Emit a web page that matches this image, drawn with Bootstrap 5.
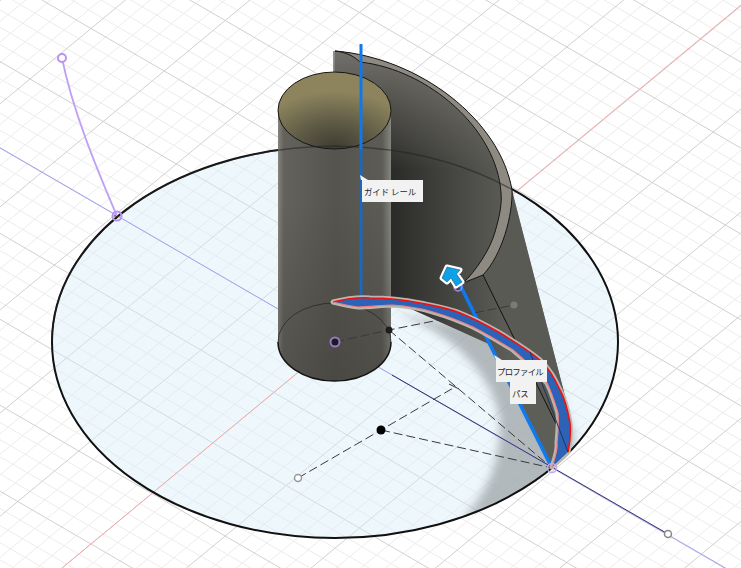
<!DOCTYPE html>
<html lang="en">
<head>
    <meta charset="UTF-8">
    <meta name="viewport" content="width=device-width, initial-scale=1.0">
    <title>Sweep</title>
    <link rel="stylesheet" href="https://cdn.jsdelivr.net/npm/bootstrap@5.3.3/dist/css/bootstrap.min.css">
    <style>
        html, body { margin: 0; background: #fff; overflow: hidden; }
        .cad-view { width: 741px; height: 568px; }
        .tip-label {
            background: #f2f2f2;
            color: #222;
            font: 8.4px/22px "Noto Sans CJK JP", "Liberation Sans", sans-serif;
            height: 22px;
            padding-left: 2px;
        }
        .tip-guide { left: 362px; top: 180px; width: 61px; }
        .tip-profile { left: 496px; top: 360px; width: 51px; letter-spacing: -.7px; padding-left: 1px; }
        .tip-path { left: 510px; top: 382px; width: 26px; }
    </style>
    <script src="https://cdn.jsdelivr.net/npm/bootstrap@5.3.3/dist/js/bootstrap.bundle.min.js"></script>
</head>
<body>
    <div class="cad-view position-relative overflow-hidden">
        <svg class="d-block" width="741" height="568" viewBox="0 0 741 568" xmlns="http://www.w3.org/2000/svg">
            <defs>
                <clipPath id="discClip"><ellipse cx="335" cy="342" rx="283" ry="196"/></clipPath>
                <filter id="soft" x="-20%" y="-20%" width="140%" height="140%"><feGaussianBlur stdDeviation="5"/></filter>
                <linearGradient id="cylFill" gradientUnits="userSpaceOnUse" x1="278" y1="0" x2="391" y2="0">
                    <stop offset="0" stop-color="#85857e"/>
                    <stop offset=".05" stop-color="#63625c"/>
                    <stop offset=".5" stop-color="#55544e"/>
                    <stop offset=".92" stop-color="#5c5b55"/>
                    <stop offset="1" stop-color="#85857f"/>
                </linearGradient>
                <linearGradient id="cylShade" gradientUnits="userSpaceOnUse" x1="0" y1="200" x2="0" y2="381">
                    <stop offset="0" stop-color="#33322e" stop-opacity="0"/>
                    <stop offset="1" stop-color="#33322e" stop-opacity=".35"/>
                </linearGradient>
                <radialGradient id="capFill" cx=".5" cy="1" r=".75">
                    <stop offset="0" stop-color="#3d3b32"/>
                    <stop offset=".45" stop-color="#5d5944"/>
                    <stop offset="1" stop-color="#8d845e"/>
                </radialGradient>
                <linearGradient id="wallFill" gradientUnits="userSpaceOnUse" x1="391" y1="0" x2="510" y2="0">
                    <stop offset="0" stop-color="#2a2a28"/>
                    <stop offset="1" stop-color="#5e5e59"/>
                </linearGradient>
                <linearGradient id="wallTop" gradientUnits="userSpaceOnUse" x1="0" y1="50" x2="0" y2="170">
                    <stop offset="0" stop-color="#8a8880" stop-opacity=".75"/>
                    <stop offset="1" stop-color="#8a8880" stop-opacity="0"/>
                </linearGradient>
            </defs>

            <path id="minorGrid" fill="none" stroke="#ececec" stroke-width="1"/>
            <path id="majorGrid" fill="none" stroke="#d0d0d0" stroke-width="1"/>

            <!-- sketch plane -->
            <ellipse cx="335" cy="342" rx="283" ry="196" fill="#d5ebf7" fill-opacity=".42"/>
            <g clip-path="url(#discClip)">
                <path d="M392,312 C440,325 492,368 500,420 C500,460 490,490 462,520 L560,490 L575,440 L540,340 Z" fill="#a3a9ac" fill-opacity=".8" filter="url(#soft)"/>
            </g>

            <!-- axes -->
            <line x1="62" y1="568" x2="741" y2="5" stroke="#f4aaaa" stroke-width="1"/>
            <line x1="0" y1="148" x2="741" y2="577" stroke="#a3a3f5" stroke-width="1"/>
            <line x1="392" y1="375" x2="668" y2="534" stroke="#34346e" stroke-width="1"/>

            <ellipse cx="335" cy="342" rx="283" ry="196" fill="none" stroke="#111" stroke-width="2"/>

            <!-- swept wall -->
            <path d="M335,51 C420,58 500,120 512,190 L566,400 L570,452 L552,467 L491,345 L391,300 L334,300 Z" fill="url(#wallFill)"/>
            <path d="M335,51 C420,58 500,120 512,190 L391,192 L391,110 L334,110 Z" fill="url(#wallTop)"/>
            <path d="M512,192 L566,400 L570,452 L483,275 Z" fill="#5a5a55"/>
            <path d="M335,51 C420,58 500,120 512,190 C513,215 502,255 483,275 L463,283 C475,272 490,250 495,232 C500,215 502,203 501,193 C497,130 430,70 360,62 C354,56 345,52 335,51 Z" fill="#8e8a82" stroke="#161616" stroke-width="1" stroke-linejoin="round"/>
            <path d="M483,275 L570,452" fill="none" stroke="#111" stroke-width="1"/>
            <path d="M334,51 V74" stroke="#222" stroke-width="1"/>

            <!-- cylinder -->
            <path d="M278,110 H391 V342 A56.500,39 0 0 1 278,342 Z" fill="url(#cylFill)"/>
            <path d="M278,110 H391 V342 A56.500,39 0 0 1 278,342 Z" fill="url(#cylShade)"/>
            <path d="M278,342 A56.500,39 0 0 0 391,342" fill="none" stroke="#111" stroke-width="1.500"/>
            <path d="M278,342 A56.500,39 0 0 1 391,342" fill="none" stroke="#222" stroke-opacity=".7" stroke-width="1"/>
            <ellipse cx="334.500" cy="110.500" rx="56.500" ry="38.500" fill="url(#capFill)" stroke="#161616" stroke-width="1"/>
            <path d="M52,342 A283,196 0 0 1 513,190" fill="none" stroke="#222" stroke-opacity=".55" stroke-width="1.500"/>

            <!-- guide rail and path -->
            <line x1="361" y1="44" x2="361" y2="149" stroke="#1078ea" stroke-width="3"/>
            <line x1="361" y1="149" x2="361" y2="300" stroke="#1d68bd" stroke-width="3"/>
            <line x1="460" y1="285" x2="552" y2="468" stroke="#0f7af0" stroke-width="3.500"/>

            <!-- construction lines -->
            <g fill="none" stroke="#3a3a3a" stroke-width="1" stroke-dasharray="9 4">
                <path d="M335,342 L389,330 L514,305"/>
                <path d="M389,330 L552,468"/>
                <path d="M298,478 L381,430 L455,387"/>
                <path d="M381,430 L552,468"/>
            </g>
            <path d="M449,384 L459,389" stroke="#333" stroke-width="1"/>

            <!-- profile -->
            <path d="M333,302 C345,299 358,297 370,298 C390,298 405,300 420,303 C435,306 448,308 460,313 C475,319 488,326 500,333 C515,342 528,350 540,360 C550,369 555,379 560,390 C566,401 568,412 570,423 C571,434 570,443 568,452 L552,467 C555,458 558,450 557,443 C558,432 559,422 558,413 C555,403 552,393 547,383 C537,372 526,361 513,350 C500,342 487,334 473,327 C460,321 447,316 433,312 C420,308 406,306 393,305 C382,305 370,307 358,307 C349,306 341,304 333,302 Z" fill="#2d63b6" stroke="#bdb6ae" stroke-width="5" stroke-linejoin="round" paint-order="stroke"/>
            <path d="M333,302 C345,299 358,297 370,298 C390,298 405,300 420,303 C435,306 448,308 460,313 C475,319 488,326 500,333 C515,342 528,350 540,360 C550,369 555,379 560,390 C566,401 568,412 570,423 C571,434 570,443 568,452" fill="none" stroke="#f01010" stroke-width="1.600"/>
            <path d="M333,302 C341,304 349,306 358,307 C370,307 382,305 393,305 C406,306 420,308 433,312 C447,316 460,321 473,327 C487,334 500,342 513,350 C526,361 537,372 547,383 C552,393 555,403 558,413 C559,422 558,432 557,443 C558,450 555,458 552,467" fill="none" stroke="#ef7f7f" stroke-width="1.200"/>
            <path d="M530,352 L568,452" fill="none" stroke="#1c3560" stroke-width="1"/>

            <!-- sketch points -->
            <path d="M62,58 C72,108 95,165 117,216" fill="none" stroke="#c0a0f5" stroke-width="1.800"/>
            <circle cx="62" cy="58" r="4" fill="#fff" stroke="#b892ee" stroke-width="2"/>
            <circle cx="117" cy="216" r="4.500" fill="none" stroke="#b892ee" stroke-width="2"/>
            <path d="M114,216 H120" stroke="#333" stroke-width="1" stroke-dasharray="2 1"/>
            <circle cx="335" cy="342" r="4.500" fill="#1c1c20" stroke="#9a78c8" stroke-width="2"/>
            <circle cx="389" cy="330" r="3.500" fill="#1d1d1b"/>
            <circle cx="381" cy="430" r="4.500" fill="#000"/>
            <circle cx="298" cy="478" r="3.500" fill="#fff" stroke="#999" stroke-width="1.500"/>
            <circle cx="668" cy="534" r="3.500" fill="#fff" stroke="#888" stroke-width="1.500"/>
            <circle cx="514" cy="305" r="3.500" fill="#7a7a76"/>
            <circle cx="552" cy="468" r="4.500" fill="none" stroke="#c6a8f0" stroke-width="1.500"/>
            <circle cx="458" cy="287" r="4" fill="none" stroke="#a98ae0" stroke-width="1.500"/>

            <!-- manipulator arrow -->
            <path d="M447,267 L460,270 L456.500,274 L462,282 L456,286 L451,278 L447,282 L442,278 Z" fill="#10a0e6" stroke="#fff" stroke-width="5" stroke-linejoin="round" paint-order="stroke"/>
            <path d="M447,267 L460,270 L456.500,274 L462,282 L456,286 L451,278 L447,282 L442,278 Z" fill="none" stroke="#0b5f8c" stroke-width=".6" stroke-linejoin="round"/>

            <!-- label pointers -->
            <path d="M360,175 L368,180 H361 Z" fill="#f2f2f2"/>
            <path d="M494,355 L502,360 H496 Z" fill="#f2f2f2"/>
        </svg>
        <div class="tip-label tip-guide position-absolute text-nowrap">ガイド レール</div>
        <div class="tip-label tip-profile position-absolute text-nowrap">プロファイル</div>
        <div class="tip-label tip-path position-absolute text-nowrap">パス</div>
    </div>
    <script>
        // isometric grid: both directions meet at the sketch origin
        const origin = [335, 342];
        const u = [73.2, 42.5];
        const v = [61, -50.5];

        function gridPath(step, skipMajor) {
            let d = "";
            for (let i = -60; i <= 60; i++) {
                if (skipMajor && i % 5 === 0) continue;
                const k = i * step;
                const ax = origin[0] + k * v[0], ay = origin[1] + k * v[1];
                const bx = origin[0] + k * u[0], by = origin[1] + k * u[1];
                d += `M${ax - 12 * u[0]},${ay - 12 * u[1]}L${ax + 12 * u[0]},${ay + 12 * u[1]}`;
                d += `M${bx - 12 * v[0]},${by - 12 * v[1]}L${bx + 12 * v[0]},${by + 12 * v[1]}`;
            }
            return d;
        }

        document.querySelector("#minorGrid").setAttribute("d", gridPath(0.2, true));
        document.querySelector("#majorGrid").setAttribute("d", gridPath(1, false));
    </script>
</body>
</html>
